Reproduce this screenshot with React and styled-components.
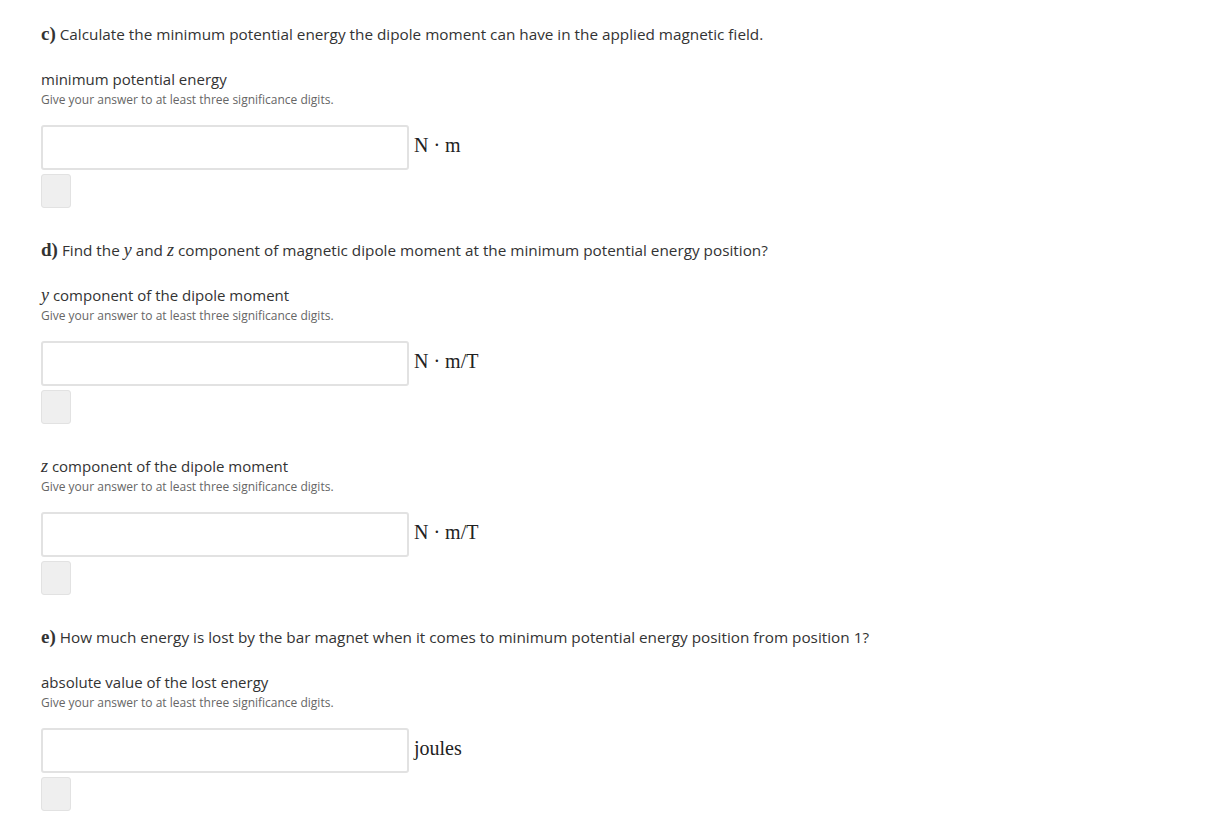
import React from "react";
import styled, { createGlobalStyle } from "styled-components";

const Global = createGlobalStyle`
  html, body { margin: 0; padding: 0; background: #fff; }
  body { font-family: "Open Sans", "Segoe UI", sans-serif; color: #333; }
`;

const Page = styled.div`
  padding: 23px 41px 20px 41px;
  display: flex;
  flex-direction: column;
`;

const Part = styled.section`
  display: flex;
  flex-direction: column;
`;

const Question = styled.p`
  margin: 0 0 24px 0;
  font-size: 15.3px;
  line-height: 22px;
  color: #333;
`;

const Letter = styled.span`
  font-family: "Liberation Serif", "DejaVu Serif", serif;
  font-weight: 700;
  font-size: 19px;
`;

const MathVar = styled.span`
  font-family: "Liberation Serif", "DejaVu Serif", serif;
  font-style: italic;
  font-size: 18px;
  line-height: 1;
`;

const Field = styled.div`
  display: flex;
  flex-direction: column;
  margin-bottom: 31px;
  & + & { margin-top: 1px; }
`;

const Label = styled.div`
  font-size: 15px;
  line-height: 20px;
  color: #333;
`;

const Hint = styled.div`
  font-size: 12px;
  line-height: 18px;
  color: #666;
  margin-top: 2px;
  margin-bottom: 16px;
`;

const InputRow = styled.div`
  display: flex;
  align-items: center;
  gap: 5px;
`;

const Input = styled.input`
  box-sizing: border-box;
  width: 368px;
  height: 45px;
  border: 2px solid #e2e2e2;
  border-radius: 3px;
  background: #fff;
  outline: none;
  margin: 0;
  padding: 0 8px;
`;

const Unit = styled.span`
  font-family: "Liberation Serif", "DejaVu Serif", serif;
  font-size: 20px;
  color: #222;
  margin-top: -5px;
`;

const Check = styled.button`
  box-sizing: border-box;
  margin-top: 4px;
  width: 30px;
  height: 34px;
  border: 1px solid #e2e2e2;
  border-radius: 3px;
  background: #efefef;
  padding: 0;
`;

const FieldBlock = ({ label, unit }) => (
  <Field>
    <Label>{label}</Label>
    <Hint>Give your answer to at least three significance digits.</Hint>
    <InputRow>
      <Input type="text" />
      <Unit>{unit}</Unit>
    </InputRow>
    <Check type="button" aria-label="check" />
  </Field>
);

export default function App() {
  return (
    <>
      <Global />
      <Page>
        <Part>
          <Question>
            <Letter>c)</Letter> Calculate the minimum potential energy the dipole moment can have in the applied magnetic field.
          </Question>
          <FieldBlock label="minimum potential energy" unit="N · m" />
        </Part>
        <Part>
          <Question>
            <Letter>d)</Letter> Find the <MathVar>y</MathVar> and <MathVar>z</MathVar> component of magnetic dipole moment at the minimum potential energy position?
          </Question>
          <FieldBlock label={<><MathVar>y</MathVar> component of the dipole moment</>} unit="N · m/T" />
          <FieldBlock label={<><MathVar>z</MathVar> component of the dipole moment</>} unit="N · m/T" />
        </Part>
        <Part>
          <Question>
            <Letter>e)</Letter> How much energy is lost by the bar magnet when it comes to minimum potential energy position from position 1?
          </Question>
          <FieldBlock label="absolute value of the lost energy" unit="joules" />
        </Part>
      </Page>
    </>
  );
}
